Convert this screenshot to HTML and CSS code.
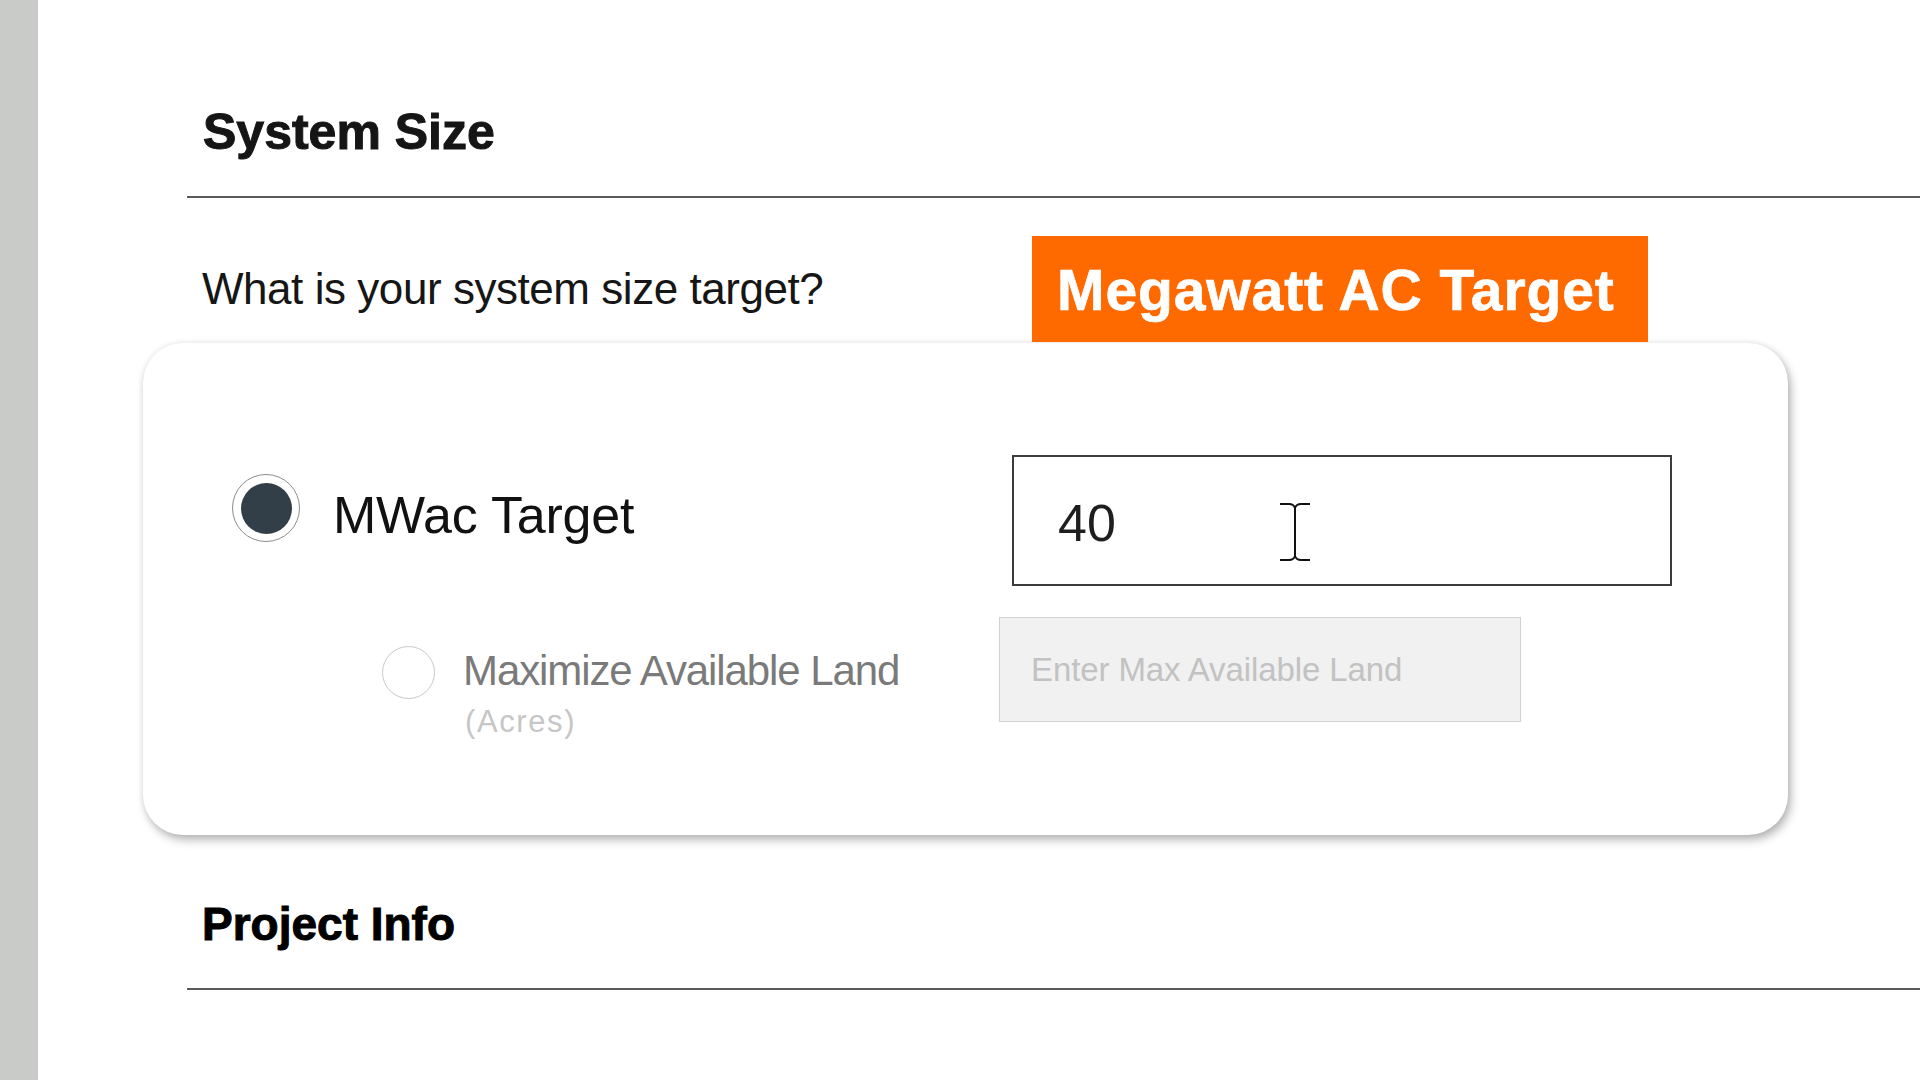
FILE: index.html
```html
<!DOCTYPE html>
<html lang="en">
<head>
<meta charset="utf-8">
<title>System Size</title>
<link rel="stylesheet" href="styles.css">
</head>
<body>
<div class="page">
  <div class="rail"></div>
  <main class="content">
    <h2 class="section-title">System Size</h2>
    <div class="question-row">
      <p class="question">What is your system size target?</p>
      <div class="badge">Megawatt AC Target</div>
    </div>
    <div class="card">
      <div class="option option-primary">
        <span class="radio radio-on"><span class="dot"></span></span>
        <span class="opt-label">MWac Target</span>
        <div class="field field-active">
          <span class="field-value">40</span>
          <svg class="ibeam" viewBox="0 0 32 60" fill="none" stroke="#111" stroke-width="2">
            <path d="M1 2 H10 C13 2 15 3 16 6"/>
            <path d="M31 2 H22 C19 2 17 3 16 6"/>
            <path d="M16 6 V54"/>
            <path d="M1 58 H10 C13 58 15 57 16 54"/>
            <path d="M31 58 H22 C19 58 17 57 16 54"/>
          </svg>
        </div>
      </div>
      <div class="option option-secondary">
        <span class="radio radio-off"></span>
        <div class="opt-text">
          <span class="opt-label-2">Maximize Available Land</span>
          <span class="opt-sub">(Acres)</span>
        </div>
        <div class="field field-disabled">Enter Max Available Land</div>
      </div>
    </div>
    <h2 class="section-title project">Project Info</h2>
  </main>
</div>
</body>
</html>
```

FILE: styles.css
```css
html, body {
  margin: 0;
  padding: 0;
  background: #ffffff;
}

body {
  font-family: "Liberation Sans", Arial, sans-serif;
  color: #111111;
}

.page {
  display: flex;
  height: 1080px;
  overflow: hidden;
}

.rail {
  flex: 0 0 38px;
  background: #c9cbc8;
}

.content {
  flex: 1;
  padding-left: 149px;
}

.section-title {
  margin: 0;
  padding: 107px 0 39px 16px;
  font-size: 50px;
  line-height: 50px;
  font-weight: 700;
  color: #151515;
  -webkit-text-stroke: 1px #151515;
  border-bottom: 2px solid #5b5b5b;
}

.section-title.project {
  margin-top: 66px;
  padding: 0 0 41px 15px;
  font-size: 46px;
  line-height: 46px;
  color: #000;
  -webkit-text-stroke: 1px #000;
}

.question-row {
  display: flex;
  align-items: center;
  height: 106px;
  margin-top: 38px;
}

.question {
  margin: 0;
  flex: 0 0 845px;
  box-sizing: border-box;
  padding-left: 15px;
  font-size: 44px;
  line-height: 44px;
  letter-spacing: -0.45px;
  color: #161616;
}

.badge {
  width: 616px;
  height: 106px;
  box-sizing: border-box;
  padding: 3px 0 0 25px;
  display: flex;
  align-items: center;
  background: #fe6a00;
  color: #ffffff;
  font-weight: 700;
  font-size: 57px;
  line-height: 57px;
  letter-spacing: 0.9px;
  -webkit-text-stroke: 0.7px #ffffff;
}

.card {
  margin-top: 1px;
  margin-left: -44px;
  width: 1645px;
  height: 492px;
  box-sizing: border-box;
  padding-top: 112px;
  background: #ffffff;
  border-radius: 40px;
  box-shadow: 3px 5px 10px rgba(0, 0, 0, 0.28), 0 0 6px rgba(0, 0, 0, 0.08);
}

.option {
  display: flex;
  align-items: flex-start;
}

.option-primary {
  padding-left: 89px;
}

.radio {
  flex-shrink: 0;
  box-sizing: border-box;
  border-radius: 50%;
}

.radio-on {
  width: 68px;
  height: 68px;
  margin-top: 19px;
  border: 1px solid #8c8c8c;
  display: flex;
  align-items: center;
  justify-content: center;
}

.dot {
  width: 51px;
  height: 51px;
  border-radius: 50%;
  background: #333f48;
}

.opt-label {
  margin-left: 33px;
  margin-top: 34px;
  font-size: 52px;
  line-height: 52px;
  letter-spacing: -0.2px;
  color: #111;
}

.field {
  box-sizing: border-box;
  display: flex;
  align-items: center;
  margin-left: auto;
}

.field-active {
  position: relative;
  width: 660px;
  height: 131px;
  margin-right: 116px;
  padding: 4px 0 0 44px;
  border: 2px solid #3c3c3c;
  font-size: 52px;
  line-height: 52px;
  color: #1e1e1e;
}

.ibeam {
  position: absolute;
  left: 265px;
  top: 45px;
  width: 32px;
  height: 60px;
}

.option-secondary {
  padding-left: 239px;
  margin-top: 31px;
}

.radio-off {
  width: 53px;
  height: 53px;
  margin-top: 29px;
  border: 1px solid #c8c8c8;
}

.opt-text {
  display: flex;
  flex-direction: column;
  margin-left: 28px;
  margin-top: 33px;
}

.opt-label-2 {
  font-size: 42px;
  line-height: 42px;
  letter-spacing: -1.1px;
  color: #7a7a7a;
}

.opt-sub {
  margin-top: 14px;
  margin-left: 2px;
  font-size: 31px;
  line-height: 31px;
  letter-spacing: 1.6px;
  color: #c6c6c6;
}

.field-disabled {
  width: 522px;
  height: 105px;
  margin-right: 267px;
  padding-left: 31px;
  background: #f1f1f1;
  border: 1px solid #d2d2d2;
  font-size: 33px;
  letter-spacing: -0.1px;
  color: #c2c2c2;
}
```
